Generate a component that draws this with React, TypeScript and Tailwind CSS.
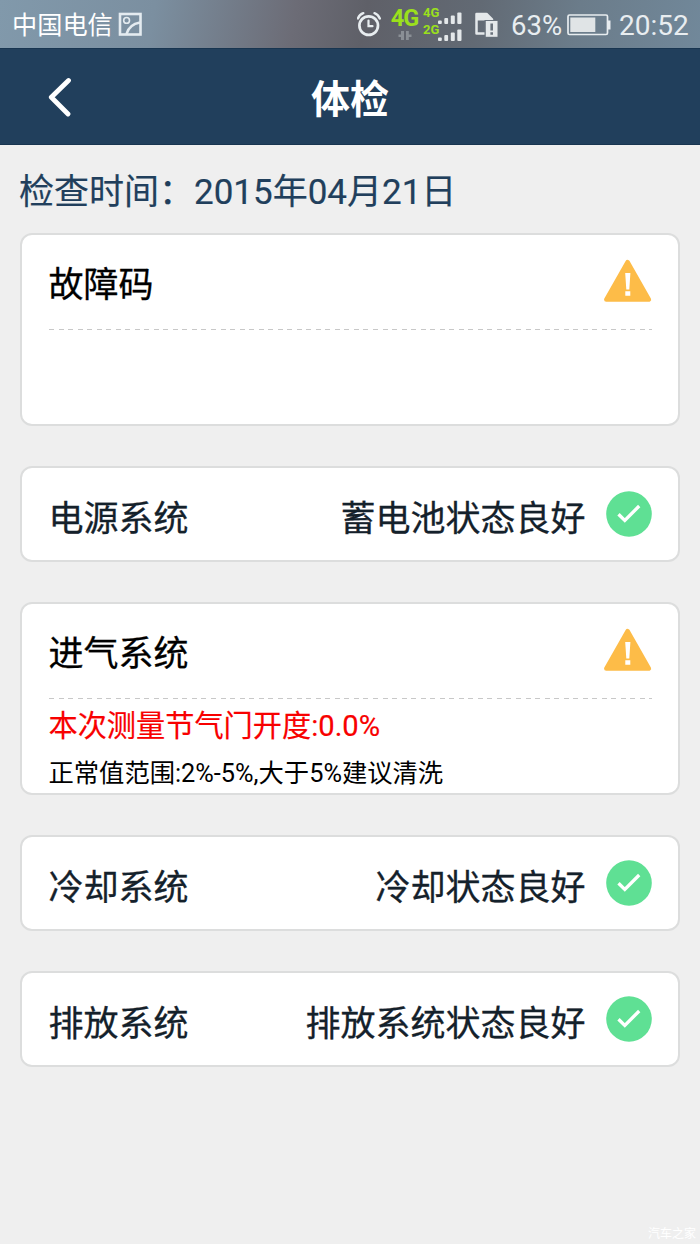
import { ReactNode } from "react";

const WarningIcon = () => (
  <svg className="mb-0.5 h-11 w-12 shrink-0" viewBox="0 0 48 44">
    <path
      d="M23.600 3.200 L44.900 40.500 H2.300 Z"
      fill="#fdbc48"
      stroke="#fdbc48"
      strokeWidth="4.5"
      strokeLinejoin="round"
    />
    <path d="M21.200 14h5.200l-1.100 16.500h-3zM21.300 32.200h5v4.600h-5z" fill="#fff" />
  </svg>
);

const CheckIcon = () => (
  <svg className="h-[46px] w-[46px] shrink-0" viewBox="0 0 46 46">
    <circle cx="23" cy="23" r="22.8" fill="#5fe094" />
    <path
      d="M12.500 23.200 L18.800 29.400 L33.200 15"
      fill="none"
      stroke="#fff"
      strokeWidth="3.3"
    />
  </svg>
);

const Signal = ({ label }: { label: string }) => (
  <div className="flex h-[17px] items-end">
    <span className="w-[15px] whitespace-nowrap text-[13px] font-bold leading-[17px] text-[#9be01c]">
      <span className="relative bottom-1">{label}</span>
    </span>
    <svg className="h-[13px] w-6" viewBox="0 0 24 13" fill="#e4e8ea">
      <rect x="0" y="8.500" width="3.8" height="3.5" rx="1" />
      <rect x="6.3" y="6" width="3.8" height="6" rx="1" />
      <rect x="12.8" y="3.500" width="4" height="8.500" rx="1" />
      <rect x="19.300" y="0.500" width="4.200" height="11.500" rx="1" />
    </svg>
  </div>
);

const StatusBar = () => (
  <div className="flex h-12 items-center bg-[linear-gradient(100deg,#8199ab_0%,#7b8fa0_22%,#6c6c76_42%,#5f6068_52%,#626a74_68%,#6b7c8a_82%,#71889a_100%)] pl-3 text-[#e8edf0]">
    <span className="w-[106px] pt-[3px] text-[25.200px] leading-[45px] text-white">
      中国电信
    </span>
    <svg className="h-6 w-6" viewBox="0 0 24 24" fill="none" stroke="#e4ebf0">
      <rect x="2" y="2" width="20.5" height="20.5" strokeWidth="2.6" />
      <circle cx="8.6" cy="8.400" r="2.900" strokeWidth="1.6" />
      <path d="M8.500 22C10 16.500 13.500 12 22 10.500" strokeWidth="2.6" />
    </svg>
    <svg
      className="ml-[215px] h-7 w-6"
      viewBox="0 0 24 28"
      fill="none"
      stroke="#e8edf0"
      strokeLinecap="round"
    >
      <circle cx="11.700" cy="15.6" r="9.300" strokeWidth="2.7" />
      <path d="M11.500 10.500V16.200H15.500" strokeWidth="2.2" />
      <path d="M0.900 8.500C2 5.700 3.800 4 6.300 3.200M17.500 3.200C20 4 21.700 5.700 22.800 8.500" strokeWidth="2.4" />
    </svg>
    <div className="ml-[9px] flex h-12 w-[29px] flex-col items-center pt-[6px]">
      <span className="text-[23.500px] font-bold leading-[25px] tracking-[-1px] text-[#9be01c]">
        4G
      </span>
      <svg className="h-[9px] w-[14px]" viewBox="0 0 14 9" fill="#8a8f95">
        <path d="M3 0H6V9H3V6H0.500V3.500H3zM8 0h2.800v3.500h2.700v2.500h-2.700v3H8z" />
      </svg>
    </div>
    <div className="ml-[4px] mt-px flex flex-col">
      <Signal label="4G" />
      <Signal label="2G" />
    </div>
    <svg className="ml-3 mt-px h-[26px] w-6" viewBox="0 0 24 26">
      <path
        d="M2.500 21.500V2H12.500L18 7.500V21.500Z"
        fill="none"
        stroke="#e4e8ea"
        strokeWidth="2.5"
        strokeLinejoin="round"
      />
      <path d="M2.500 1.500H12.500L18 7V8.500H2.500z" fill="#e4e8ea" />
      <rect x="10.500" y="8" width="13.500" height="17.500" fill="#69727c" />
      <rect x="11.800" y="9" width="11.700" height="15.800" fill="#e4e8ea" />
      <path d="M16.400 11.500h2.600v7h-2.600zM16.400 20.300h2.600v2.500h-2.600z" fill="#69727c" />
    </svg>
    <span className="ml-[13px] w-14 pt-[4px] text-[27.500px] leading-[44px]">
      63%
    </span>
    <svg className="mt-px h-[22px] w-11" viewBox="0 0 44 22">
      <rect
        x="1"
        y="1"
        width="39.500"
        height="19.500"
        rx="1.500"
        fill="none"
        stroke="#e8edf0"
        strokeWidth="1.700"
      />
      <rect x="3.300" y="3.500" width="25" height="14.500" fill="#e0e4e6" />
      <path d="M41 6.500h2.500v9H41z" fill="#e8edf0" />
    </svg>
    <span className="ml-[8px] pt-[4px] text-[28px] leading-[44px]">20:52</span>
  </div>
);

const Card = ({ children }: { children: ReactNode }) => (
  <div className="rounded-[12px] border-2 border-[#dcdddd] bg-white px-[26.500px]">
    {children}
  </div>
);

const WarningCard = ({
  title,
  children,
}: {
  title: string;
  children?: ReactNode;
}) => (
  <Card>
    <div className="h-[189px]">
      <div className="flex h-[94px] items-center justify-between">
        <span className="pt-2 text-[35px] leading-12 text-black [-webkit-text-stroke:0.3px_black]">
          {title}
        </span>
        <WarningIcon />
      </div>
      <div className="h-px bg-[repeating-linear-gradient(90deg,#c8c8c8_0_5px,transparent_5px_9.53px)]" />
      {children}
    </div>
  </Card>
);

const StatusCard = ({ title, status }: { title: string; status: string }) => (
  <Card>
    <div className="flex h-[92px] items-center text-[35px] leading-12 text-[#14212b] [-webkit-text-stroke:0.3px_#14212b]">
      <span className="pt-3">{title}</span>
      <span className="ml-auto mr-5 pt-3">{status}</span>
      <CheckIcon />
    </div>
  </Card>
);

const App = () => {
  return (
    <div className="flex h-[1244px] w-[700px] flex-col overflow-hidden bg-[#efefef] font-[Roboto,'Noto_Sans_CJK_SC',sans-serif]">
      <StatusBar />
      <header className="grid h-[97px] grid-cols-3 items-center border-y border-[#183550] bg-[#213f5c]">
        <svg
          className="ml-12 h-10 w-6"
          viewBox="0 0 24 40"
          fill="none"
          stroke="#fff"
          strokeWidth="4.800"
          strokeLinecap="round"
          strokeLinejoin="round"
        >
          <path d="M20.500 3.500L3.300 20.300L20 37" />
        </svg>
        <h1 className="pt-1.5 text-center text-[39px] font-bold leading-12 text-white">
          体检
        </h1>
      </header>
      <main className="flex flex-1 flex-col px-5">
        <p className="-ml-px h-[88px] pt-6 text-[35px] leading-12 text-[#213f5c] [-webkit-text-stroke:0.2px_#213f5c]">
          检查时间：2015年04月21日
        </p>
        <div className="flex flex-col gap-10">
          <WarningCard title="故障码" />
          <StatusCard title="电源系统" status="蓄电池状态良好" />
          <WarningCard title="进气系统">
            <p className="pt-[7px] text-[29.200px] leading-10 text-[#f80000] [-webkit-text-stroke:0.2px_#f80000]">
              本次测量节气门开度:0.0%
            </p>
            <p className="pt-[10px] text-[25.300px] leading-9 text-black">
              正常值范围:2%-5%,大于5%建议清洗
            </p>
          </WarningCard>
          <StatusCard title="冷却系统" status="冷却状态良好" />
          <StatusCard title="排放系统" status="排放系统状态良好" />
        </div>
        <span className="-mr-4 mb-px mt-auto self-end text-[12px] leading-[18px] text-white">
          汽车之家
        </span>
      </main>
    </div>
  );
};

export default App;
